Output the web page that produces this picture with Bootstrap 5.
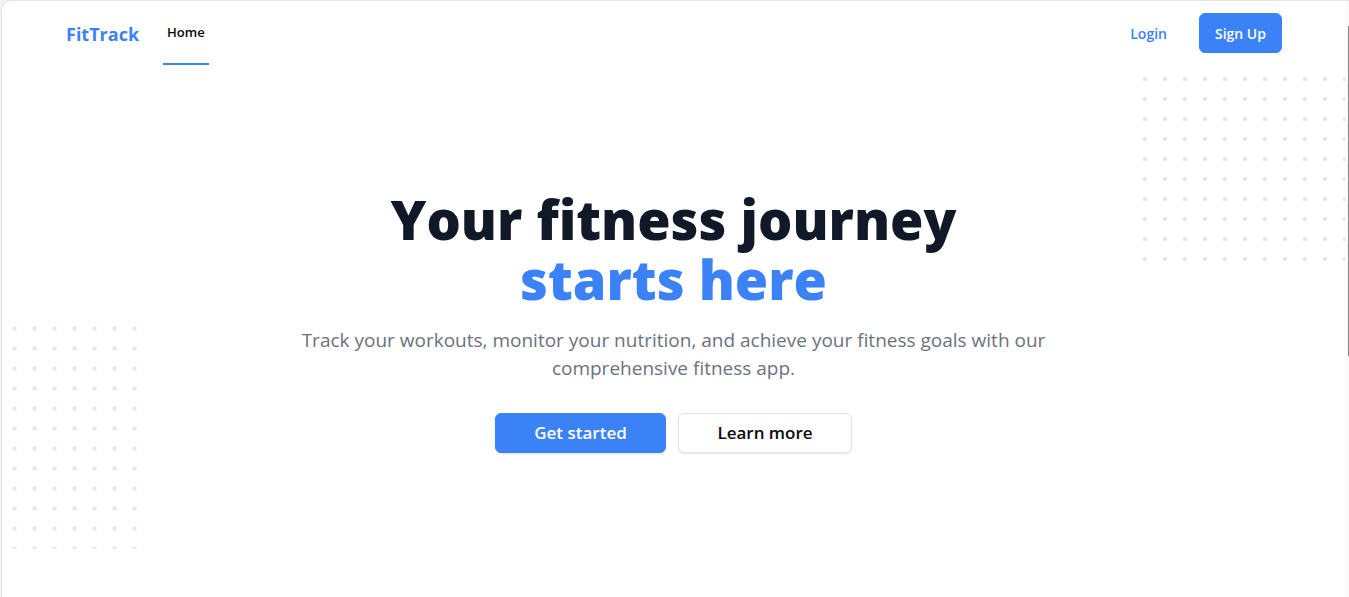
<!DOCTYPE html>
<html lang="en">
<head>
<meta charset="utf-8">
<meta name="viewport" content="width=device-width, initial-scale=1">
<title>FitTrack</title>
<link href="https://cdn.jsdelivr.net/npm/bootstrap@5.3.0/dist/css/bootstrap.min.css" rel="stylesheet">
<style>
  :root { --brand: #3b82f6; --ink: #111827; --dot: #e5e7eb; }
  body { background: #f3f3f3; font-family: "Open Sans", "Noto Sans", sans-serif; }
  .app-frame { margin-left: 1px; min-height: 100vh; background: #fff; border: 1px solid #e3e3e3; border-width: 1px 0 0 1px; border-top-left-radius: 10px; overflow: hidden; }
  .site-nav { height: 64px; padding: 0 63px 0 64px; }
  .brand-link { color: var(--brand); font-size: 18px; font-weight: 700; padding-top: 2px; }
  .nav-tab { color: #09090b; font-size: 13px; font-weight: 600; padding: 2px 4px 0; border-bottom: 2px solid var(--brand); }
  .login-link { color: var(--brand); font-size: 14px; font-weight: 600; }
  .btn-brand { --bs-btn-bg: #3b82f6; --bs-btn-color: #fff; --bs-btn-border-color: #3b82f6; --bs-btn-hover-bg: #2563eb; --bs-btn-hover-color: #fff; --bs-btn-hover-border-color: #2563eb; }
  .btn-plain { --bs-btn-bg: #fff; --bs-btn-color: #09090b; --bs-btn-border-color: #e4e4e7; --bs-btn-hover-bg: #f4f4f5; }
  .btn-signup { height: 40px; padding: 0 15px; font-size: 14px; font-weight: 600; }
  .btn-hero { height: 40px; padding: 0; font-size: 17px; font-weight: 600; box-shadow: 0 1px 2px rgba(0,0,0,.1); }
  .btn-start { width: 171px; }
  .btn-learn { width: 174px; }
  .hero { padding-top: 124px; padding-bottom: 120px; }
  .hero-title { color: var(--ink); font-size: 54px; font-weight: 800; line-height: 60px; }
  .hero-accent { color: var(--brand); }
  .hero-text { color: #6b7280; font-size: 19px; line-height: 28px; max-width: 768px; padding-top: 1px; }
  .hero-actions { gap: 12px; margin-top: 31px; }
  .dots { fill: var(--dot); pointer-events: none; }
  .dots-right { top: 12px; right: 0; width: 202px; height: 184px; }
  .dots-left { top: 261px; left: 10px; width: 130px; height: 223px; }
  .scroll-rail { top: 0; right: 0; width: 4px; background: #fafafa; }
  .scroll-thumb { top: 25px; right: 0; width: 1px; height: 330px; background: #858585; }
</style>
</head>
<body>
<div class="app-frame position-relative pe-1">
  <header>
    <nav class="site-nav d-flex align-items-stretch justify-content-between" aria-label="Main">
      <div class="d-flex align-items-stretch">
        <a class="brand-link d-flex align-items-center text-decoration-none" href="#">FitTrack</a>
        <a class="nav-tab d-flex align-items-center text-decoration-none ms-4" href="#" aria-current="page">Home</a>
      </div>
      <div class="d-flex align-items-center">
        <a class="login-link text-decoration-none me-3 pe-3" href="#">Login</a>
        <button type="button" class="btn btn-brand btn-signup">Sign Up</button>
      </div>
    </nav>
  </header>
  <main class="position-relative">
    <svg class="dots dots-right position-absolute" aria-hidden="true">
      <defs><pattern id="dot-grid" width="20" height="20" patternUnits="userSpaceOnUse"><rect width="4" height="4"/></pattern></defs>
      <rect width="100%" height="100%" fill="url(#dot-grid)"/>
    </svg>
    <svg class="dots dots-left position-absolute" aria-hidden="true">
      <defs><pattern id="dot-grid-soft" width="20" height="20" patternUnits="userSpaceOnUse"><rect x=".5" y=".5" width="4" height="4"/></pattern></defs>
      <rect width="100%" height="100%" fill="url(#dot-grid-soft)"/>
    </svg>
    <section class="hero d-flex flex-column align-items-center text-center position-relative">
      <h1 class="hero-title mb-0">Your fitness journey<br><span class="hero-accent">starts here</span></h1>
      <p class="hero-text mt-3 mb-0">Track your workouts, monitor your nutrition, and achieve your fitness goals with our comprehensive fitness app.</p>
      <div class="hero-actions d-flex">
        <button type="button" class="btn btn-brand btn-hero btn-start">Get started</button>
        <button type="button" class="btn btn-plain btn-hero btn-learn">Learn more</button>
      </div>
    </section>
  </main>
  <div class="scroll-rail position-absolute h-100" aria-hidden="true"></div>
  <div class="scroll-thumb position-absolute" aria-hidden="true"></div>
</div>
<script src="https://cdn.jsdelivr.net/npm/bootstrap@5.3.0/dist/js/bootstrap.bundle.min.js"></script>
</body>
</html>
